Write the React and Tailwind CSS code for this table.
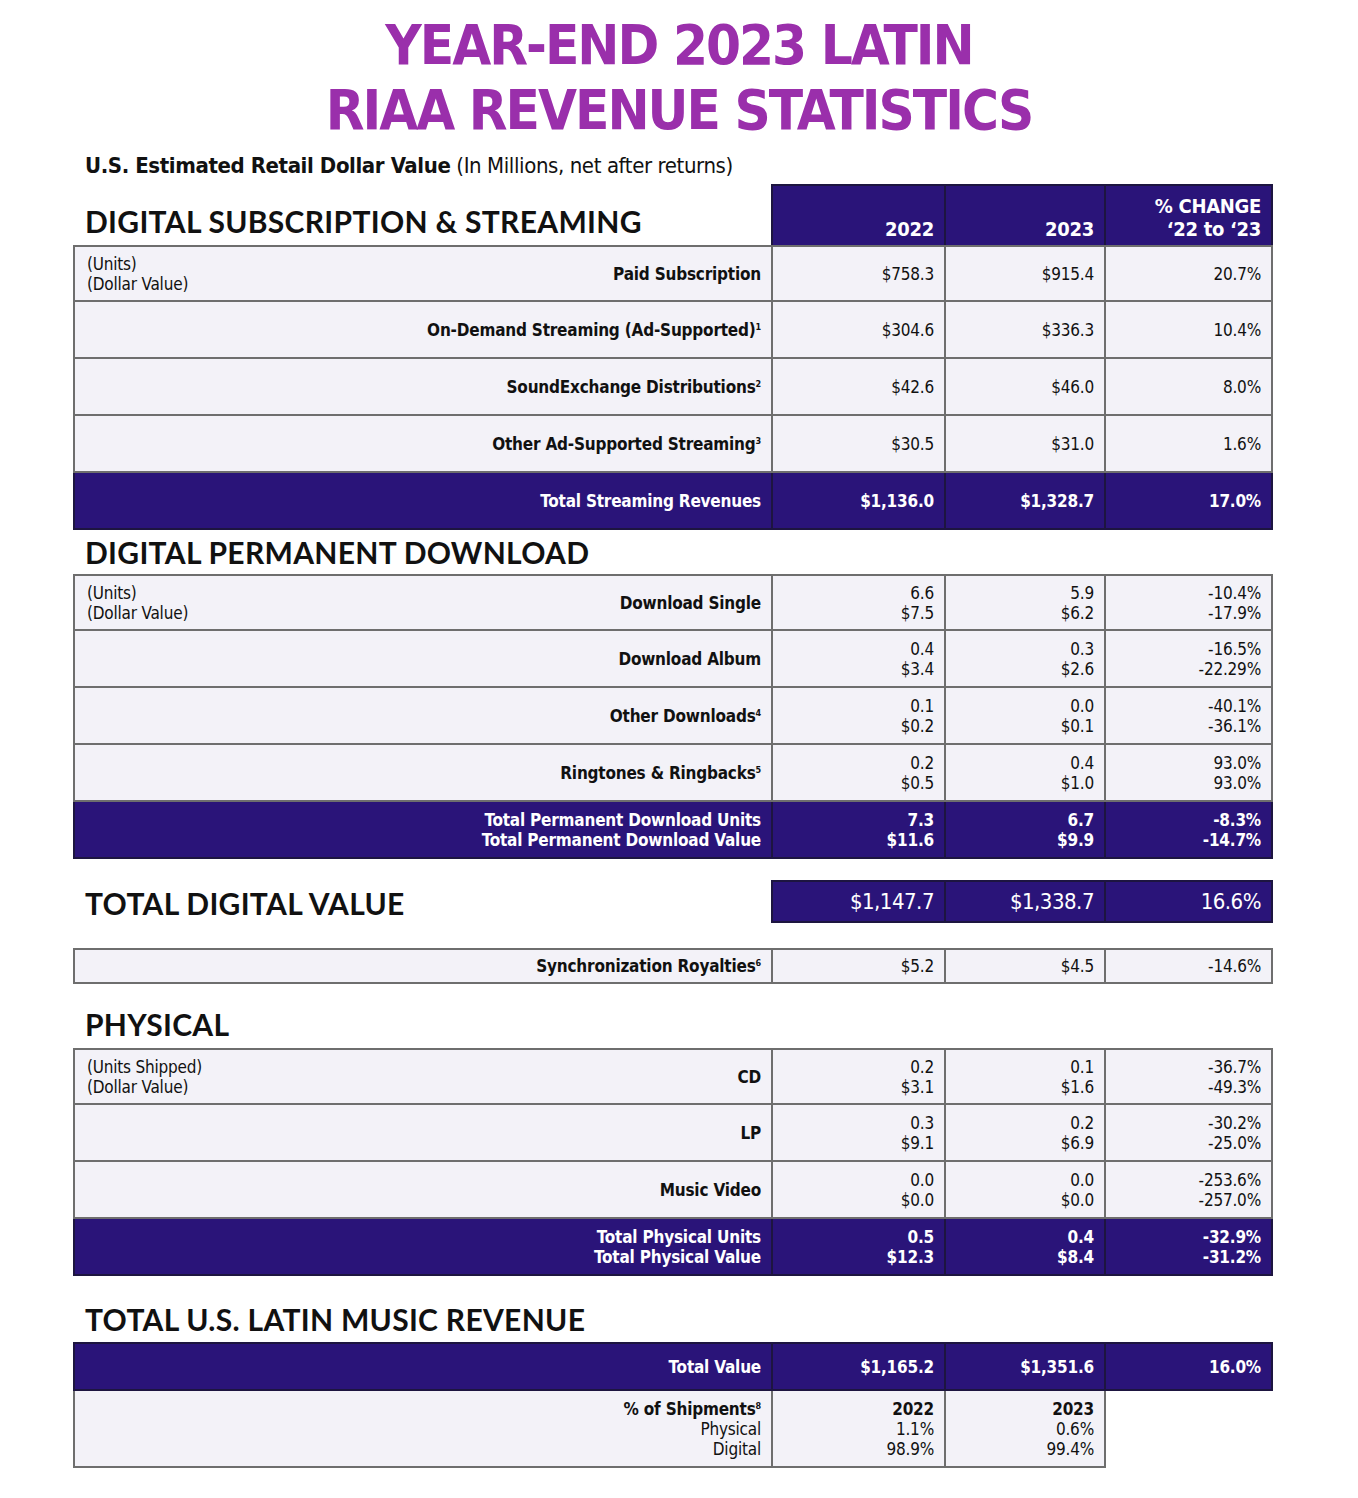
import React from 'react'

const NAVY = 'bg-[#2a1479]'

function Cell({ children, dark, first, between, className = '' }) {
  return (
    <div
      className={`flex items-center border-r-2 border-b-2 pr-[10px] text-right text-[17px] leading-[20px] tracking-[-0.2px] ${
        between ? 'justify-between pl-3' : 'justify-end'
      } ${
        dark ? 'bg-[#2a1479] border-[#1d1540] text-white font-bold' : 'bg-[#f3f2f8] border-[#6e6e6e] text-[#111]'
      } ${first ? 'border-l-2' : ''} ${className}`}
    >
      {children}
    </div>
  )
}

function Lines({ items }) {
  return (
    <div>
      {items.map((t, i) => (
        <div key={i}>{t}</div>
      ))}
    </div>
  )
}

function Row({ label, note, values, dark, top }) {
  return (
    <div className={`grid h-[57px] grid-cols-[700px_173px_160px_167px] ${top ? 'border-t-2 border-[#6e6e6e]' : ''}`}>
      <Cell dark={dark} first between>
        <div className="pl-[-2px] text-left font-normal">{note && <Lines items={note} />}</div>
        <div className="font-bold">
          {Array.isArray(label) ? <Lines items={label} /> : label}
        </div>
      </Cell>
      {values.map((v, i) => (
        <Cell key={i} dark={dark}>
          {Array.isArray(v) ? <Lines items={v} /> : v}
        </Cell>
      ))}
    </div>
  )
}

function Sup({ n }) {
  return <sup className="relative -top-[6px] align-baseline text-[9px] leading-none">{n}</sup>
}

function Heading({ children, className = '' }) {
  return (
    <h2 className={`pl-3 font-['Lato',sans-serif] text-[30px] font-bold leading-none tracking-[0.3px] text-[#111] ${className}`}>
      {children}
    </h2>
  )
}

const UNITS = ['(Units)', '(Dollar Value)']

export default function App() {
  return (
    <div className="min-h-[1498px] w-[1358px] bg-white font-['DejaVu_Sans_Condensed','DejaVu_Sans',sans-serif] text-[#111]">
      {/* Title */}
      <header className="pt-[12px] text-center text-[56px] font-bold leading-[65px] tracking-[-2px] text-[#9a2fab]">
        <div>YEAR-END 2023 LATIN</div>
        <div>RIAA REVENUE STATISTICS</div>
      </header>

      <div className="ml-[73px] w-[1200px]">
        <p className="mt-[10px] pl-3 text-[22px] leading-[28px] tracking-[-0.4px]">
          <span className="font-bold">U.S. Estimated Retail Dollar Value</span> (In Millions, net after returns)
        </p>

        {/* Digital subscription & streaming */}
        <div className="mt-[4px] flex items-end">
          <Heading className="w-[700px] pb-[9px]">DIGITAL SUBSCRIPTION &amp; STREAMING</Heading>
          <div className="grid h-[61px] grid-cols-[173px_160px_167px] border-l-2 border-t-2 border-[#1d1540] text-[20px] font-bold leading-[23px] tracking-[-0.3px] text-white">
            <div className={`${NAVY} flex items-end justify-end border-r-2 border-[#1d1540] pb-[4px] pr-[10px]`}>2022</div>
            <div className={`${NAVY} flex items-end justify-end border-r-2 border-[#1d1540] pb-[4px] pr-[10px]`}>2023</div>
            <div className={`${NAVY} flex items-end justify-end border-r-2 border-[#1d1540] pb-[4px] pr-[10px] text-right`}>
              <div>
                <div>% CHANGE</div>
                <div>‘22 to ‘23</div>
              </div>
            </div>
          </div>
        </div>
        <div>
          <Row label="Paid Subscription" note={UNITS} values={['$758.3', '$915.4', '20.7%']} top />
          <Row label={<>On-Demand Streaming (Ad-Supported)<Sup n="1" /></>} values={['$304.6', '$336.3', '10.4%']} />
          <Row label={<>SoundExchange Distributions<Sup n="2" /></>} values={['$42.6', '$46.0', '8.0%']} />
          <Row label={<>Other Ad-Supported Streaming<Sup n="3" /></>} values={['$30.5', '$31.0', '1.6%']} />
          <Row label="Total Streaming Revenues" values={['$1,136.0', '$1,328.7', '17.0%']} dark />
        </div>

        {/* Digital permanent download */}
        <div className="flex h-[44px] items-center">
          <Heading>DIGITAL PERMANENT DOWNLOAD</Heading>
        </div>
        <div>
          <Row label="Download Single" note={UNITS} values={[['6.6', '$7.5'], ['5.9', '$6.2'], ['-10.4%', '-17.9%']]} top />
          <Row label="Download Album" values={[['0.4', '$3.4'], ['0.3', '$2.6'], ['-16.5%', '-22.29%']]} />
          <Row label={<>Other Downloads<Sup n="4" /></>} values={[['0.1', '$0.2'], ['0.0', '$0.1'], ['-40.1%', '-36.1%']]} />
          <Row label={<>Ringtones &amp; Ringbacks<Sup n="5" /></>} values={[['0.2', '$0.5'], ['0.4', '$1.0'], ['93.0%', '93.0%']]} />
          <Row
            label={['Total Permanent Download Units', 'Total Permanent Download Value']}
            values={[['7.3', '$11.6'], ['6.7', '$9.9'], ['-8.3%', '-14.7%']]}
            dark
          />
        </div>

        {/* Total digital value */}
        <div className="mt-[21px] flex items-center">
          <Heading className="w-[700px] pt-[2px]">TOTAL DIGITAL VALUE</Heading>
          <div className="grid h-[43px] grid-cols-[173px_160px_167px] border-l-2 border-t-2 border-[#1d1540] text-[22px] leading-none tracking-[-0.5px] text-white">
            <div className={`${NAVY} flex items-center justify-end border-r-2 border-b-2 border-[#1d1540] pr-[10px]`}>$1,147.7</div>
            <div className={`${NAVY} flex items-center justify-end border-r-2 border-b-2 border-[#1d1540] pr-[10px]`}>$1,338.7</div>
            <div className={`${NAVY} flex items-center justify-end border-r-2 border-b-2 border-[#1d1540] pr-[10px]`}>16.6%</div>
          </div>
        </div>

        {/* Synchronization */}
        <div className="mt-[25px] grid h-[36px] grid-cols-[700px_173px_160px_167px] border-t-2 border-[#6e6e6e]">
          <Cell first>
            <span className="font-bold">Synchronization Royalties<Sup n="6" /></span>
          </Cell>
          <Cell>$5.2</Cell>
          <Cell>$4.5</Cell>
          <Cell>-14.6%</Cell>
        </div>

        {/* Physical */}
        <div className="flex h-[64px] items-end pb-[9px]">
          <Heading>PHYSICAL</Heading>
        </div>
        <div>
          <Row label="CD" note={['(Units Shipped)', '(Dollar Value)']} values={[['0.2', '$3.1'], ['0.1', '$1.6'], ['-36.7%', '-49.3%']]} top />
          <Row label="LP" values={[['0.3', '$9.1'], ['0.2', '$6.9'], ['-30.2%', '-25.0%']]} />
          <Row label="Music Video" values={[['0.0', '$0.0'], ['0.0', '$0.0'], ['-253.6%', '-257.0%']]} />
          <Row label={['Total Physical Units', 'Total Physical Value']} values={[['0.5', '$12.3'], ['0.4', '$8.4'], ['-32.9%', '-31.2%']]} dark />
        </div>

        {/* Total U.S. Latin music revenue */}
        <div className="flex h-[66px] items-end pb-[8px]">
          <Heading>TOTAL U.S. LATIN MUSIC REVENUE</Heading>
        </div>
        <div className="grid h-[49px] grid-cols-[700px_173px_160px_167px] border-t-2 border-[#1d1540]">
          <Cell dark first>Total Value</Cell>
          <Cell dark>$1,165.2</Cell>
          <Cell dark>$1,351.6</Cell>
          <Cell dark>16.0%</Cell>
        </div>
        <div className="grid h-[77px] grid-cols-[700px_173px_160px]">
          <Cell first>
            <div>
              <div className="font-bold">% of Shipments<Sup n="8" /></div>
              <div>Physical</div>
              <div>Digital</div>
            </div>
          </Cell>
          <Cell>
            <div>
              <div className="font-bold">2022</div>
              <div>1.1%</div>
              <div>98.9%</div>
            </div>
          </Cell>
          <Cell>
            <div>
              <div className="font-bold">2023</div>
              <div>0.6%</div>
              <div>99.4%</div>
            </div>
          </Cell>
        </div>
      </div>
    </div>
  )
}
